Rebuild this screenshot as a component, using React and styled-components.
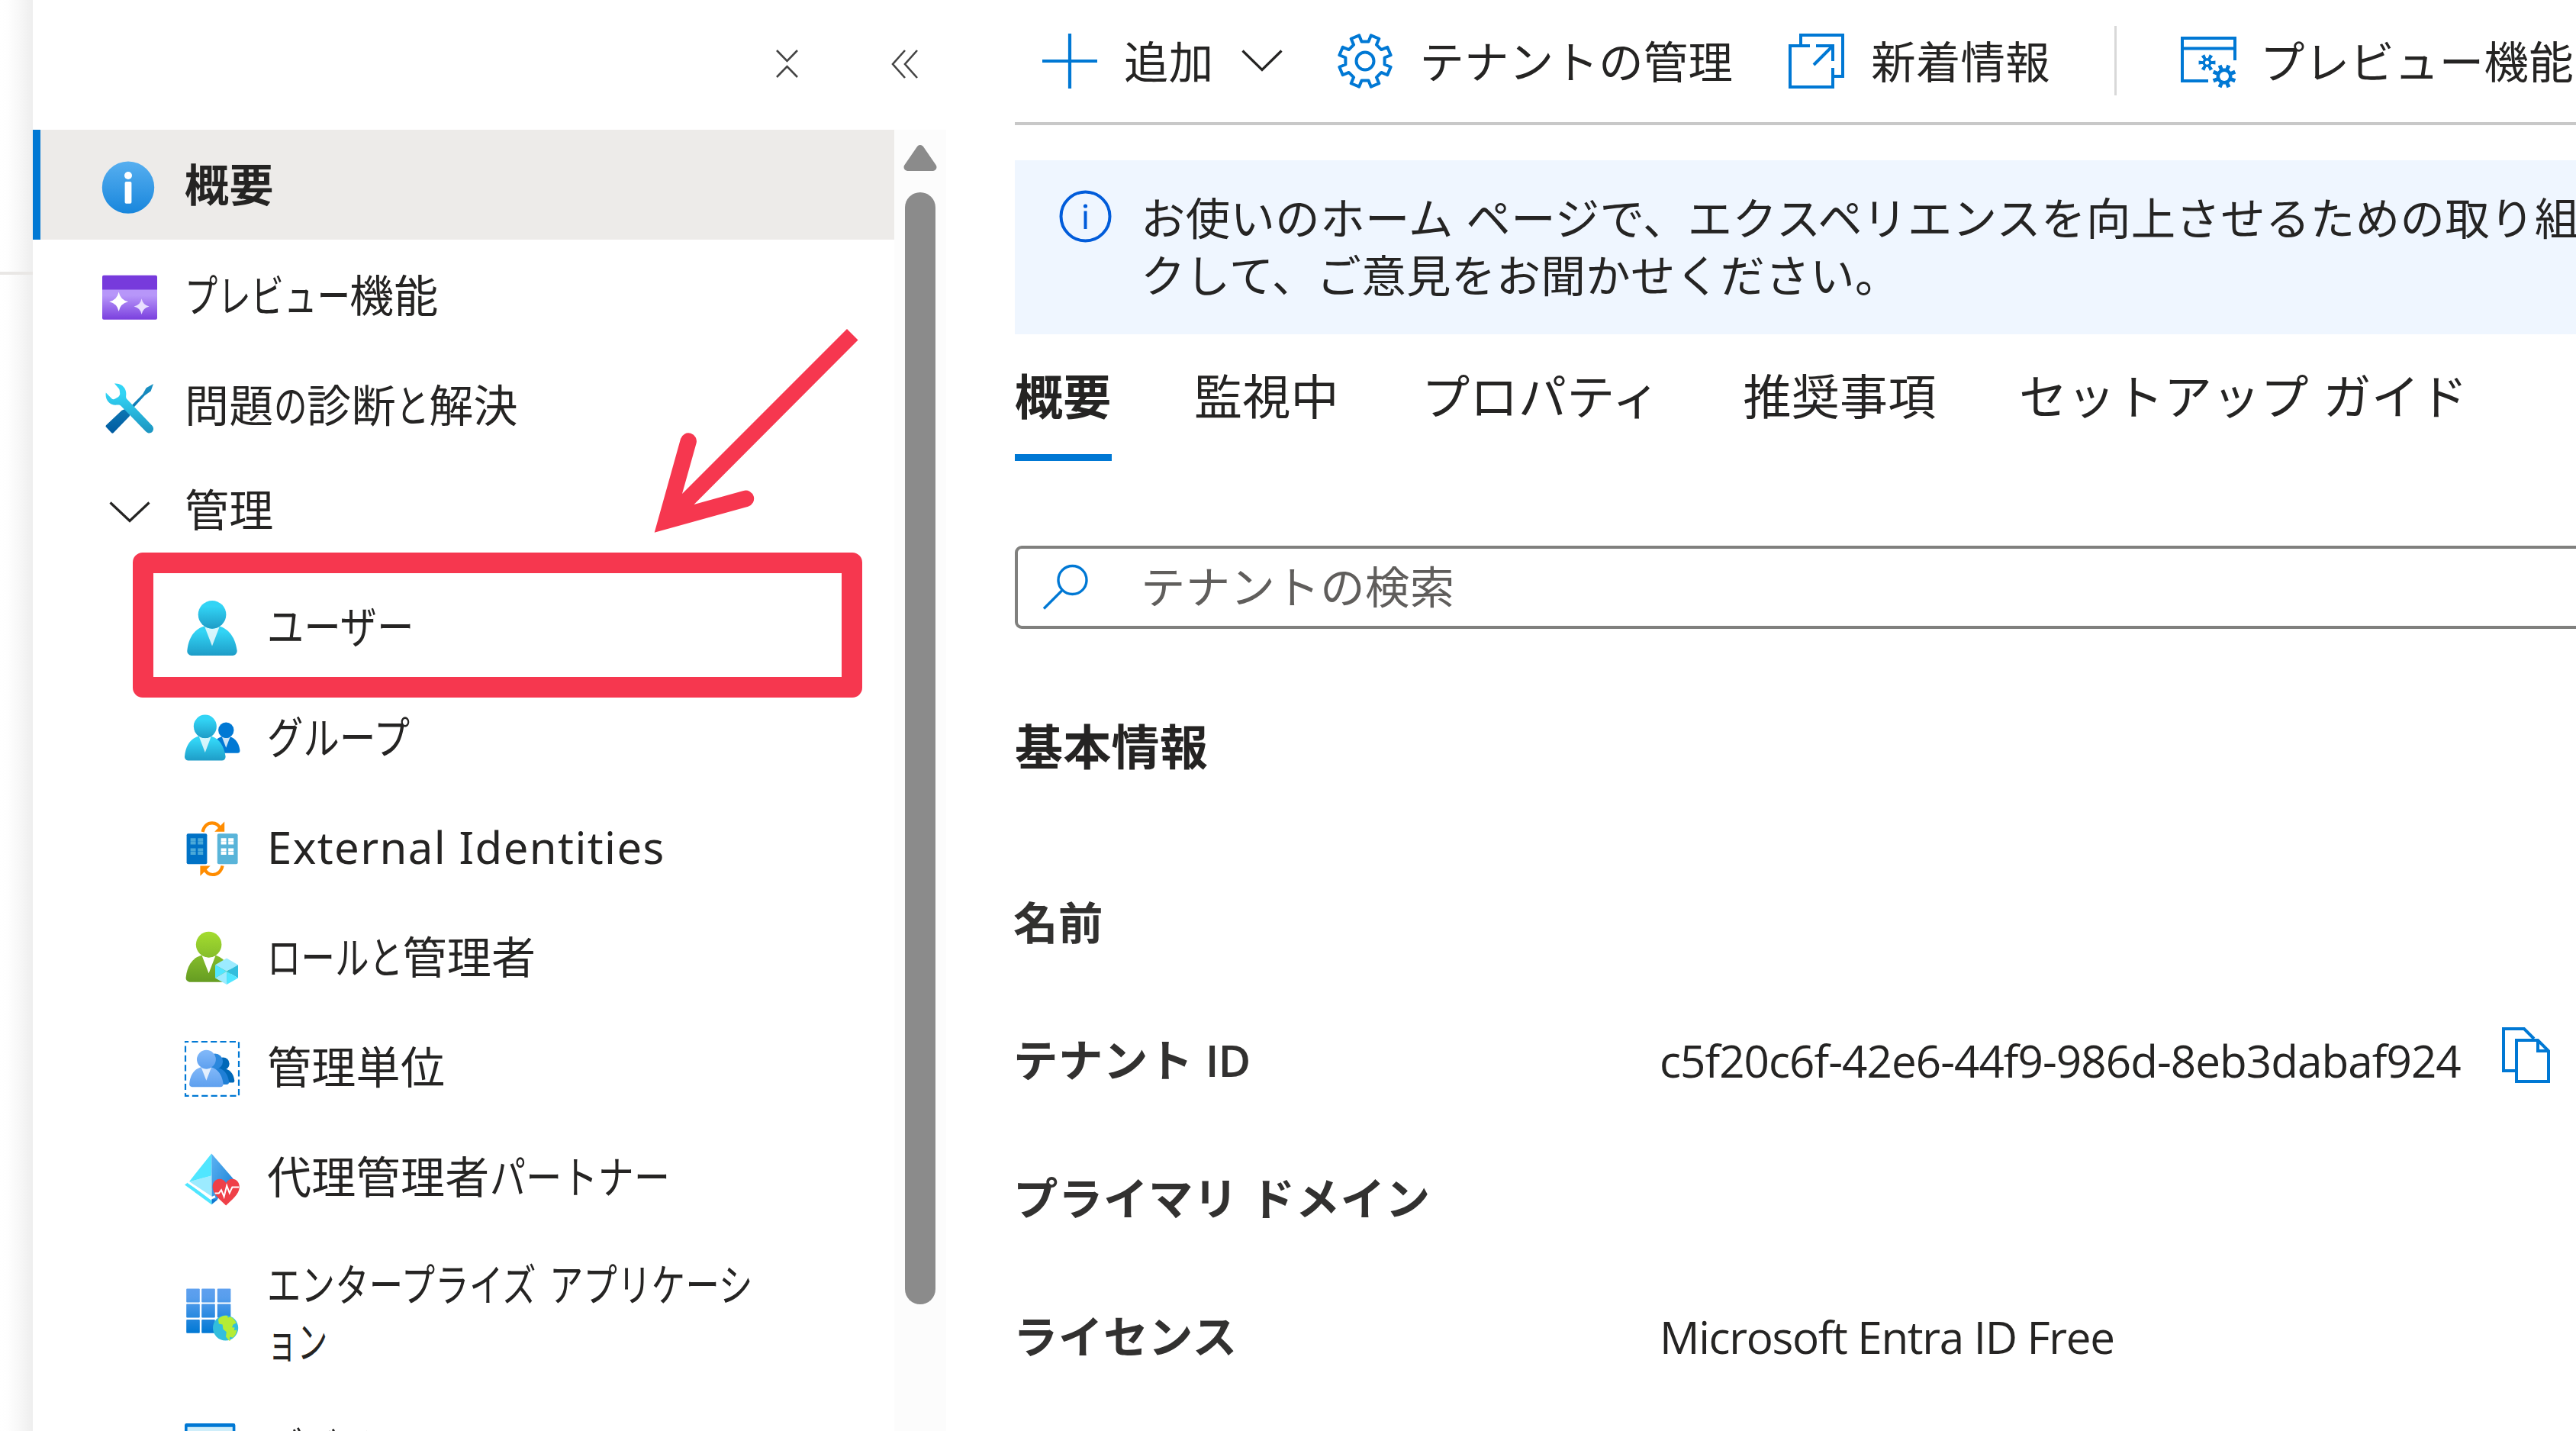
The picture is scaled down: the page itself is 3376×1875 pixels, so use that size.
import React from "react";
import styled, { createGlobalStyle } from "styled-components";

const BLUE = "#0078d4";
const INK = "#252423";
const RED = "#f6374f";
const MAIN_FONT = `"Open Sans", "Noto Sans CJK JP", sans-serif`;
const MENU_FONT = `"Noto Sans", "Noto Sans CJK JP", sans-serif`;

const GlobalStyle = createGlobalStyle`
  * { box-sizing: border-box; }
  html, body { margin: 0; padding: 0; overflow: hidden; background: #fff; }
`;

const Page = styled.div`
  position: relative;
  display: flex;
  width: 3376px;
  height: 1875px;
  overflow: hidden;
  background: #fff;
  color: ${INK};
  font-family: ${MAIN_FONT};
  font-size: 58.4px;
`;

/* ---------- left edge ---------- */

const Gutter = styled.div`
  flex: none;
  width: 43px;
  padding-top: 356px;
  background: linear-gradient(to right, #fff 0, #fefefe 10px, #f8f8f8 24px, #eeeeee 43px);
`;

const GutterRule = styled.div`
  height: 4px;
  background: #e9e7e5;
`;

/* ---------- side menu ---------- */

const Sidebar = styled.aside`
  flex: none;
  display: flex;
  flex-direction: column;
  width: 1197px;
  font-family: ${MENU_FONT};
  font-size: 58px;
`;

const SidebarHeader = styled.div`
  flex: none;
  display: flex;
  justify-content: flex-end;
  align-items: center;
  gap: 122px;
  height: 169.5px;
  padding: 0 37px 2px 0;
`;

const SidebarBody = styled.div`
  flex: 1;
  display: flex;
  min-height: 0;
`;

const Menu = styled.nav`
  width: 1129px;
  overflow: hidden;
`;

const MenuRow = styled.div`
  display: flex;
  align-items: center;
  gap: 36px;
  height: ${(p) => p.$height || 144.6}px;
  padding-left: ${(p) => (p.$nested ? 199 : 81)}px;
  border-left: ${(p) => (p.$nested ? 0 : 10)}px solid ${(p) => (p.$selected ? BLUE : "transparent")};
  background: ${(p) => (p.$selected ? "#edebe9" : "transparent")};
  font-weight: ${(p) => (p.$selected ? 700 : 400)};
`;

const GroupRow = styled(MenuRow)`
  height: 136px;
  margin-bottom: 9px;
`;

const MenuLabel = styled.span`
  padding-bottom: ${(p) => p.$lift || 0}px;
  line-height: 75px;
  white-space: nowrap;
  letter-spacing: ${(p) => p.$tracking ?? 0.3}px;
`;

const NarrowKana = styled.span`
  display: inline-block;
  width: ${(p) => p.$count * p.$ratio}em;
  transform: scaleX(${(p) => p.$ratio});
  transform-origin: 0 50%;
  white-space: nowrap;
`;

const Track = styled.div`
  display: flex;
  flex-direction: column;
  align-items: center;
  gap: 28px;
  width: 68px;
  padding-top: 20px;
  background: #fcfcfc;
`;

const Thumb = styled.div`
  width: 40px;
  height: 1457px;
  border-radius: 20px;
  background: #8b8b8b;
`;

/* ---------- main blade ---------- */

const Main = styled.main`
  flex: none;
  width: 2046px;
  margin-left: 90px;
`;

const Toolbar = styled.div`
  display: flex;
  align-items: center;
  height: 163.5px;
  padding: 0 0 0 36px;
  border-bottom: 4px solid #c8c8c8;
`;

const Command = styled.div`
  flex: none;
  display: flex;
  align-items: center;
  gap: ${(p) => p.$gap || 35}px;
  margin-right: ${(p) => p.$after || 0}px;
  line-height: 80px;
  white-space: nowrap;
  letter-spacing: 0.3px;
`;

const CommandLabel = styled.span`
  padding-top: 3px;
`;

const Divider = styled.div`
  flex: none;
  width: 3px;
  height: 91px;
  margin-right: 84px;
  background: #d8d8d8;
`;

const Banner = styled.div`
  display: flex;
  gap: 37px;
  height: 228px;
  margin-top: 46.5px;
  padding: 38px 0 0 57px;
  background: #eff6ff;
`;

const BannerText = styled.p`
  margin: 0;
  line-height: 75px;
  white-space: nowrap;
  letter-spacing: 0.4px;
  word-spacing: 1px;
`;

const Tabs = styled.div`
  display: flex;
  gap: 108.4px;
  height: 166px;
  font-size: 63px;
`;

const Tab = styled.div`
  flex: none;
  padding-top: 36px;
  height: 166px;
  line-height: 90px;
  white-space: nowrap;
  letter-spacing: 0.3px;
  word-spacing: 2px;
  font-weight: ${(p) => (p.$active ? 700 : 400)};
  border-bottom: 9px solid ${(p) => (p.$active ? BLUE : "transparent")};
`;

const SearchBox = styled.div`
  display: flex;
  align-items: center;
  gap: 67px;
  width: 2100px;
  height: 109px;
  margin-top: 110.5px;
  padding: 0 0 0 32px;
  border: 4px solid #80807e;
  border-radius: 9px;
  color: #605e5c;
  line-height: 80px;
  letter-spacing: 0.4px;
`;

const SectionTitle = styled.h2`
  margin: 109px 0 0;
  font-size: 63px;
  line-height: 90px;
  font-weight: 700;
  letter-spacing: 0.3px;
`;

const Properties = styled.div`
  margin-top: 97px;
`;

const Property = styled.div`
  display: flex;
  align-items: center;
  height: 180.6px;
  white-space: nowrap;
`;

const PropertyName = styled.div`
  width: 847px;
  margin-left: -2px;
  padding-bottom: 9px;
  color: #323130;
  font-weight: 700;
  letter-spacing: 0.6px;
`;

const Semi = styled.span`
  font-weight: 600;
  letter-spacing: -1px;
`;

const PropertyValue = styled.div`
  padding-bottom: 1px;
  letter-spacing: ${(p) => p.$tracking || 0}px;
`;

const CopyButton = styled.span`
  display: flex;
  margin: 0 0 15px 54px;
`;

/* ---------- annotations ---------- */

const Highlight = styled.div`
  position: absolute;
  left: 174px;
  top: 724px;
  width: 956px;
  height: 190px;
  border: 27px solid ${RED};
  border-radius: 13px;
`;

const Arrow = styled.svg`
  position: absolute;
  left: 840px;
  top: 420px;
`;

/* ---------- icons ---------- */

const Glyph = styled.svg`
  flex: none;
  display: block;
  overflow: visible;
`;

const MenuGlyph = styled(Glyph)`
  margin-top: 4px;
`;

const Azure = ({ children }) => (
  <MenuGlyph width="72" height="72" viewBox="0 0 18 18">
    {children}
  </MenuGlyph>
);

const Gradient = ({ id, from, to, hold = 0 }) => (
  <linearGradient id={id} x1="0" y1="0" x2="0" y2="1">
    <stop offset={hold} stopColor={from} />
    <stop offset="1" stopColor={to} />
  </linearGradient>
);

const Person = ({ head, body, transform, collar = 0.8 }) => (
  <g transform={transform}>
    <path
      fill={body}
      d="M15.72 18a1.45 1.45 0 0 0 1.45-1.45.47.47 0 0 0 0-.17C16.59 11.81 14 8.09 9 8.09S1.34 11.24.83 16.39A1.46 1.46 0 0 0 2.14 18z"
    />
    <path fill="#fff" fillOpacity={collar} d="M9 9.17a4.59 4.59 0 0 1-2.48-.73L9 14.86l2.44-6.38A4.53 4.53 0 0 1 9 9.17z" />
    <circle fill={head} cx="9.01" cy="4.58" r="4.58" />
  </g>
);

const InfoIcon = () => (
  <Azure>
    <Gradient id="info" from="#57aff0" to="#1886dc" />
    <circle cx="8.5" cy="9.4" r="8.55" fill="url(#info)" />
    <circle cx="8.5" cy="5.5" r="1.25" fill="#fff" />
    <rect x="7.4" y="7.5" width="2.2" height="7.2" rx=".45" fill="#fff" />
  </Azure>
);

const PreviewIcon = () => (
  <Azure>
    <Gradient id="pv" from="#b796f9" to="#7a3fde" hold={0.25} />
    <path d="M0 6.2h18v10a.5.5 0 0 1-.5.5H.5a.5.5 0 0 1-.5-.5z" fill="url(#pv)" />
    <path d="M.5 2.2h17a.5.5 0 0 1 .5.5v4.2H0V2.7a.5.5 0 0 1 .5-.5z" fill="#773adc" />
    <path d="M5.4 7.6q.5 2.6 3.1 3.2-2.6.6-3.1 3.2-.5-2.6-3.1-3.2 2.6-.6 3.1-3.2z" fill="#fff" />
    <path d="M12.9 9.8q.4 2.1 2.5 2.6-2.1.5-2.5 2.6-.4-2.1-2.5-2.6 2.1-.5 2.5-2.6z" fill="#e9dfff" />
  </Azure>
);

const ToolsIcon = () => (
  <Azure>
    <Gradient id="wr" from="#32d4f5" to="#1c94c0" hold={0.2} />
    <Gradient id="sd" from="#1a93c4" to="#005ba1" />
    <path
      d="M16.75 1.5 L15.9 3.9 13.9 5.3 9.9 9.7 8.9 12.1 3.7 17.5a.5.5 0 0 1-.7 0L1.3 15.7a.5.5 0 0 1 0-.7L6.4 10.2 9.2 9 13.3 4.8 14.4 2.8z"
      fill="url(#sd)"
    />
    <path
      d="M4 1.4c2.4-.2 4.1 1.6 3.8 3.9-.05.5 0 .9.3 1.2l8.2 8.6c.6.6.6 1.5.1 2.1-.6.6-1.5.5-2.1-.1L6.1 8.7c-.3-.3-.7-.4-1.2-.3C2.5 8.7.8 6.7 1.2 4.4l1.9 1.9c.3.3.7.3 1.1.1l1-.6c.4-.3.6-.7.6-1.1l-.1-.9c0-.4-.2-.7-.4-.9z"
      fill="url(#wr)"
    />
  </Azure>
);

const UserIcon = () => (
  <Azure>
    <Gradient id="cy" from="#32d4f5" to="#1e9cc7" hold={0.2} />
    <Person head="url(#cy)" body="url(#cy)" />
  </Azure>
);

const GroupIcon = () => (
  <Azure>
    <Gradient id="cyg" from="#32d4f5" to="#1e9cc7" hold={0.2} />
    <Person head={BLUE} body={BLUE} transform="translate(8.56 3.9) scale(.556)" />
    <Person head="url(#cyg)" body="url(#cyg)" transform="translate(-.68 1.4) scale(.82 .833)" />
  </Azure>
);

const WindowPane = ({ x, y, fill }) => (
  <path
    fill={fill}
    d={`M${x} ${y}h1.75v1h-1.75z M${x} ${y + 1.1}h1.75v1h-1.75z`}
  />
);

const Windows = ({ x, fill }) => (
  <g>
    {[5.55, 8.9].map((y) => (
      <g key={y}>
        <WindowPane x={x} y={y} fill={fill} />
        <WindowPane x={x + 2.4} y={y} fill={fill} />
      </g>
    ))}
  </g>
);

const ExternalIcon = () => (
  <Azure>
    <rect x=".65" y="4.05" width="6.7" height="10" rx=".5" fill="#0072c6" />
    <Windows x={1.9} fill="#4ba9d8" />
    <rect x="10.7" y="4.05" width="6.7" height="10" rx=".5" fill="#59b4d9" />
    <Windows x={11.9} fill="#fff" />
    <path d="M5.9 3.5C6.3 1.6 7.5.6 9 .6c1.3 0 2.2.7 2.7 1.9" fill="none" stroke="#ff8c00" strokeWidth="1.05" />
    <path d="M13.05.1v3.35H9.8z" fill="#ff8c00" />
    <path d="M12.4 14.6c-.4 1.9-1.7 2.9-3.2 2.9-1.2 0-2.2-.7-2.7-1.9" fill="none" stroke="#ff8c00" strokeWidth="1.05" />
    <path d="M5.1 17.95V14.6h3.3z" fill="#ff8c00" />
  </Azure>
);

const RolesIcon = () => (
  <Azure>
    <Gradient id="gh" from="#a4dc2f" to="#86be2b" />
    <Gradient id="gb" from="#86be2b" to="#659c22" />
    <Person head="url(#gh)" body="url(#gb)" collar={1} transform="translate(-.36 .2) scale(.917)" />
    <path d="M13.77 8.9 17.5 11.05 13.77 13.2 10 11.05z" fill="#9cebff" />
    <path d="M10 11.05 13.77 13.2 10 15.35z" fill="#50e6ff" />
    <path d="M10 15.35 13.77 13.2V17.5z" fill="#9cebff" />
    <path d="M17.5 11.05v4.3L13.77 13.2z" fill="#32bedd" />
    <path d="M17.5 15.35 13.77 17.5V13.2z" fill="#50e6ff" />
  </Azure>
);

const UnitsIcon = () => (
  <Azure>
    <Gradient id="un" from="#83b9f9" to="#5ea0ef" />
    <rect x=".25" y="0" width="17.5" height="17.7" fill="none" stroke={BLUE} strokeWidth=".55" strokeDasharray="2.05 1.04" strokeDashoffset="1" />
    <Person head="#0068b8" body="#0068b8" collar={0} transform="translate(8.4 5.1) scale(.461)" />
    <Person head="#2b88dd" body="#1f7fd6" collar={0} transform="translate(4.9 3.9) scale(.56)" />
    <Person head="url(#un)" body="url(#un)" transform="translate(.98 2.7) scale(.68 .672)" />
  </Azure>
);

const PartnerIcon = () => (
  <Azure>
    <linearGradient id="pr" x1="0" y1="0" x2="1" y2="1">
      <stop offset="0" stopColor="#5cb3f3" />
      <stop offset="1" stopColor="#0f78d0" />
    </linearGradient>
    <path d="M8.8.35V7.6L1.45 9.6 8.8 15z" fill="#9cebff" />
    <path d="M8.8.35 1.45 9.6 8.8 7.6z" fill="#50e6ff" />
    <path d="M8.8.35 17 9.9 8.9 16.9z" fill="url(#pr)" />
    <path d="M0 10.6 1 9.9 8.9 15.8v1.3z" fill="#50e6ff" />
    <path d="M8.9 15.4v1.6l2-1.6z" fill="#0f78d0" />
    <path d="M1.1 9.7 8.9 14.9 10 14.4" fill="none" stroke="#fff" strokeWidth=".75" />
    <path
      d="M13.55 17.4C11.9 15.6 9.15 13.8 9.15 11.3c0-1.5 1-2.6 2.3-2.6.9 0 1.7.5 2.1 1.3.4-.8 1.2-1.3 2.1-1.3 1.3 0 2.3 1.1 2.3 2.6 0 2.5-2.75 4.3-4.4 6.1z"
      fill="#ef4048"
    />
    <path d="M9.9 13.4h1.3l.8-1.1.9 2.2.9-3.6.9 2.4.9-1.9h2.2" fill="none" stroke="#fff" strokeWidth=".5" />
  </Azure>
);

const AppsIcon = () => (
  <Azure>
    <linearGradient id="ap" gradientUnits="userSpaceOnUse" x1="0" y1=".6" x2="0" y2="15.2">
      <stop offset="0" stopColor="#5ea0ef" />
      <stop offset=".2" stopColor="#589eed" />
      <stop offset="1" stopColor="#0078d4" />
    </linearGradient>
    {[0.65, 5.65, 10.75].map((y) =>
      [0.55, 5.55, 10.7].map((x) => (
        <rect key={`${x}-${y}`} x={x} y={y} width="4.4" height="4.45" rx=".25" fill="url(#ap)" />
      ))
    )}
    <circle cx="13.4" cy="13.5" r="4.15" fill="#32bedd" />
    <path
      d="M11 10.6c.8-.9 1.9-1.3 3-1.1l.2.6.8-.3c1 .5 1.6 1.3 1.9 2.1l-1 .5-.4.9.9.1-.2.9.9-.2c-.1 1.1-.6 2-1.4 2.6l-.8-.3-.2.7.5.4-.6.2-1.1-1.3.2-1.6-1.1-.9-.2-1.5-1.2-.3z"
      fill="#b4ec36"
    />
  </Azure>
);

const DevicesIcon = () => (
  <Azure>
    <path d="M0 1.1a.6.6 0 0 1 .6-.6h15.4a.6.6 0 0 1 .6.6V13H0z" fill={BLUE} />
    <path d="M.9 1.7h14.8v11H.9z" fill="#cfeefa" />
  </Azure>
);

const Chevron = ({ width = 54, height = 28 }) => (
  <Glyph width={width} height={height} viewBox={`0 0 ${width} ${height}`}>
    <path d={`M1.5 1.5 ${width / 2} ${height - 2.5} ${width - 1.5} 1.5`} fill="none" stroke={INK} strokeWidth="3.2" />
  </Glyph>
);

const ChevronSlot = styled.span`
  display: flex;
  justify-content: center;
  width: 72px;
`;

const CollapseIcon = () => (
  <Glyph width="29" height="37" viewBox="0 0 29 37">
    <path d="M1 1 14.5 15 28 1M1 36 14.5 22 28 36" fill="none" stroke="#444" strokeWidth="2.6" />
  </Glyph>
);

const DoubleChevronIcon = () => (
  <Glyph width="35" height="34" viewBox="0 0 35 34">
    <path d="M18 -1 2 17 18 35M34 -1 18 17 34 35" fill="none" stroke="#444" strokeWidth="2.6" />
  </Glyph>
);

const ScrollUpIcon = () => (
  <Glyph width="44" height="34" viewBox="0 0 44 34">
    <path d="M22 5 38.5 29H5.5z" fill="#8b8b8b" stroke="#8b8b8b" strokeWidth="10" strokeLinejoin="round" />
  </Glyph>
);

const PlusIcon = () => (
  <Glyph width="72" height="72" viewBox="0 0 72 72">
    <path d="M36 0v72M0 36h72" stroke={BLUE} strokeWidth="4.2" />
  </Glyph>
);

const gearPath = (cx, cy, outer, inner, spread, teeth = 8) => {
  const at = (r, deg) => {
    const a = (deg * Math.PI) / 180;
    return `${(cx + r * Math.sin(a)).toFixed(2)} ${(cy - r * Math.cos(a)).toFixed(2)}`;
  };
  const step = 360 / teeth;
  const points = [];
  for (let i = 0; i < teeth; i += 1) {
    const mid = step / 2 + i * step;
    points.push(at(inner, mid - spread - 3), at(outer, mid - spread), at(outer, mid + spread), at(inner, mid + spread + 3));
  }
  return `M${points.join("L")}Z`;
};

const GearIcon = () => (
  <Glyph width="72" height="72" viewBox="0 0 72 72">
    <path d={gearPath(36, 36, 34.5, 26, 9.5)} fill="none" stroke={BLUE} strokeWidth="4" strokeLinejoin="round" />
    <circle cx="36" cy="36" r="11.5" fill="none" stroke={BLUE} strokeWidth="4" />
  </Glyph>
);

const NewsIcon = () => (
  <Glyph width="73" height="72" viewBox="0 0 73 72">
    <path d="M16 14V2h55v54H59M28 16H2v54h56V45M36 16h22v20M57 17 33 41" fill="none" stroke={BLUE} strokeWidth="4" />
  </Glyph>
);

const PreviewSettingsIcon = () => (
  <Glyph width="73" height="72" viewBox="0 0 73 72">
    <path d="M71 35V6H2v56h34M2 19.5h69" fill="none" stroke={BLUE} strokeWidth="4" />
    <path d={gearPath(34.5, 38, 10.5, 5.5, 10, 6)} fill={BLUE} stroke={BLUE} strokeWidth="1.2" />
    <circle cx="34.5" cy="38" r="2.6" fill="#fff" />
    <path d={gearPath(57, 56, 15, 10, 7.5)} fill={BLUE} stroke={BLUE} strokeWidth="1.2" />
    <circle cx="57" cy="56" r="6" fill="#fff" />
  </Glyph>
);

const BannerInfoIcon = () => (
  <Glyph width="71" height="71" viewBox="0 0 71 71">
    <circle cx="35.5" cy="35.5" r="32" fill="none" stroke="#015cda" strokeWidth="4" />
    <circle cx="35.5" cy="22" r="2.6" fill="#015cda" />
    <path d="M35.5 28.5v23.5" stroke="#015cda" strokeWidth="4" />
  </Glyph>
);

const SearchIcon = () => (
  <Glyph width="62" height="62" viewBox="0 0 62 62">
    <circle cx="39.5" cy="22" r="18.5" fill="none" stroke={BLUE} strokeWidth="3.4" />
    <path d="M26.5 35 2 59.5" stroke={BLUE} strokeWidth="3.4" />
  </Glyph>
);

const CopyIcon = () => (
  <Glyph width="63" height="73" viewBox="0 0 63 73">
    <path d="M19 57H2V2h27l13 13" fill="none" stroke={BLUE} strokeWidth="4" />
    <path d="M19 17h28l14 14v40H19z" fill="#fff" stroke={BLUE} strokeWidth="4" />
    <path d="M47 17v14h14" fill="none" stroke={BLUE} strokeWidth="4" />
  </Glyph>
);

/* ---------- pieces ---------- */

const KANA = /([\u3040-\u30ff]+)/;

const MenuText = ({ text, ratio = 0.76, lastRatio, tracking, lift }) => {
  const lines = text.split("\n");
  const ratioOf = (i) => (i > 0 && lastRatio ? lastRatio : ratio);
  return (
    <MenuLabel $tracking={tracking} $lift={lift}>
      {lines.map((line, i) => (
        <React.Fragment key={line}>
          {i > 0 && <br />}
          {line.split(KANA).map((part, j) =>
            KANA.test(part) ? (
              <NarrowKana key={j} $count={part.length} $ratio={ratioOf(i)}>
                {part}
              </NarrowKana>
            ) : (
              part
            )
          )}
        </React.Fragment>
      ))}
    </MenuLabel>
  );
};

const topItems = [
  { icon: InfoIcon, text: "概要", selected: true, tracking: 0.5 },
  { icon: PreviewIcon, text: "プレビュー機能", ratio: 0.745 },
  { icon: ToolsIcon, text: "問題の診断と解決", ratio: 0.75 },
];

const manageItems = [
  { icon: UserIcon, text: "ユーザー", ratio: 0.83 },
  { icon: GroupIcon, text: "グループ", ratio: 0.815 },
  { icon: ExternalIcon, text: "External Identities", tracking: 1.4 },
  { icon: RolesIcon, text: "ロールと管理者", ratio: 0.765, lift: 2 },
  { icon: UnitsIcon, text: "管理単位", lift: 3 },
  { icon: PartnerIcon, text: "代理管理者パートナー", ratio: 0.81, lift: 4 },
  { icon: AppsIcon, text: "エンタープライズ アプリケーシ\nョン", ratio: 0.765, lastRatio: 0.68, height: 209 },
  { icon: DevicesIcon, text: "デバイス", ratio: 0.8 },
];

const SideMenu = () => (
  <Sidebar>
    <SidebarHeader>
      <CollapseIcon />
      <DoubleChevronIcon />
    </SidebarHeader>
    <SidebarBody>
      <Menu>
        {topItems.map(({ icon: Icon, selected, ...label }) => (
          <MenuRow key={label.text} $selected={selected}>
            <Icon />
            <MenuText {...label} />
          </MenuRow>
        ))}
        <GroupRow>
          <ChevronSlot>
            <Chevron />
          </ChevronSlot>
          <MenuText text="管理" lift={7} />
        </GroupRow>
        {manageItems.map(({ icon: Icon, height, ...label }) => (
          <MenuRow key={label.text} $nested $height={height}>
            <Icon />
            <MenuText {...label} />
          </MenuRow>
        ))}
      </Menu>
      <Track>
        <ScrollUpIcon />
        <Thumb />
      </Track>
    </SidebarBody>
  </Sidebar>
);

const CommandBar = () => (
  <Toolbar>
    <Command $after={37}>
      <PlusIcon />
      <CommandLabel>追加</CommandLabel>
    </Command>
    <Command $after={72}>
      <Chevron width={54} height={29} />
    </Command>
    <Command $after={73}>
      <GearIcon />
      <CommandLabel>テナントの管理</CommandLabel>
    </Command>
    <Command $after={84}>
      <NewsIcon />
      <CommandLabel>新着情報</CommandLabel>
    </Command>
    <Divider />
    <Command $gap={31}>
      <PreviewSettingsIcon />
      <CommandLabel>プレビュー機能</CommandLabel>
    </Command>
  </Toolbar>
);

const tabs = ["概要", "監視中", "プロパティ", "推奨事項", "セットアップ ガイド"];

export default function App() {
  return (
    <Page>
      <GlobalStyle />
      <Gutter>
        <GutterRule />
      </Gutter>
      <SideMenu />
      <Main>
        <CommandBar />
        <Banner>
          <BannerInfoIcon />
          <BannerText>
            お使いのホーム ページで、エクスペリエンスを向上させるための取り組
            <br />
            クして、ご意見をお聞かせください。
          </BannerText>
        </Banner>
        <Tabs>
          {tabs.map((tab, i) => (
            <Tab key={tab} $active={i === 0}>
              {tab}
            </Tab>
          ))}
        </Tabs>
        <SearchBox>
          <SearchIcon />
          テナントの検索
        </SearchBox>
        <SectionTitle>基本情報</SectionTitle>
        <Properties>
          <Property>
            <PropertyName>名前</PropertyName>
          </Property>
          <Property>
            <PropertyName>
              テナント <Semi>ID</Semi>
            </PropertyName>
            <PropertyValue $tracking={-0.95}>c5f20c6f-42e6-44f9-986d-8eb3dabaf924</PropertyValue>
            <CopyButton>
              <CopyIcon />
            </CopyButton>
          </Property>
          <Property>
            <PropertyName>プライマリ ドメイン</PropertyName>
          </Property>
          <Property>
            <PropertyName>ライセンス</PropertyName>
            <PropertyValue $tracking={-1.35}>Microsoft Entra ID Free</PropertyValue>
          </Property>
        </Properties>
      </Main>
      <Highlight />
      <Arrow width="300" height="290" viewBox="840 420 300 290">
        <path
          d="M1110 431 1124.5 445.5 909.5 661 974.4 643A10.5 10.5 0 0 1 980.4 663.7L857.7 697.8 892 575A10.5 10.5 0 0 1 912.5 581L894 647Z"
          fill={RED}
        />
      </Arrow>
    </Page>
  );
}
